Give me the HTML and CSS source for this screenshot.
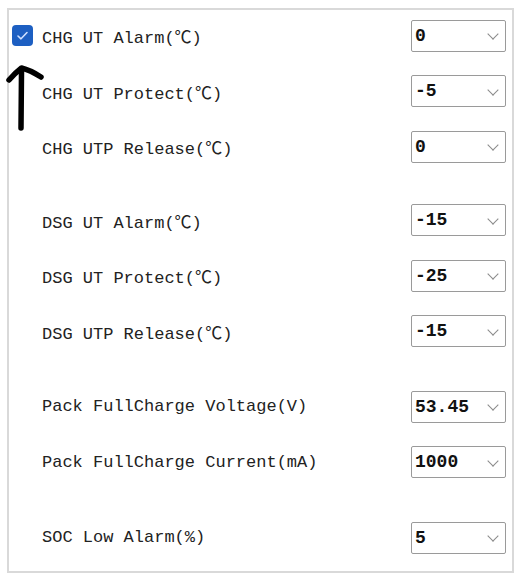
FILE: index.html
```html
<!DOCTYPE html>
<html lang="en">

<head>
    <meta charset="UTF-8" />
    <meta name="viewport" content="width=device-width, initial-scale=1.0" />
    <title>UT Settings</title>
    <link rel="stylesheet" href="styles.css">
</head>

<body>
    <div class="panel">
        <div class="group first">
            <div class="row">
                <span class="check-slot">
                    <span class="checkbox">
                        <svg width="21" height="21" viewBox="0 0 21 21">
                            <path d="M6 11 L9 13.8 L15 7.5" fill="none" stroke="#cfe0ff" stroke-width="1.6" stroke-linecap="round" stroke-linejoin="round" />
                        </svg>
                    </span>
                </span>
                <span class="label">CHG UT Alarm(℃)</span>
                <div class="select"><span class="value">0</span><i class="chev"></i></div>
            </div>
            <div class="row">
                <span class="check-slot"></span>
                <span class="label">CHG UT Protect(℃)</span>
                <div class="select"><span class="value">-5</span><i class="chev"></i></div>
            </div>
            <div class="row">
                <span class="check-slot"></span>
                <span class="label">CHG UTP Release(℃)</span>
                <div class="select"><span class="value">0</span><i class="chev"></i></div>
            </div>
        </div>

        <div class="group">
            <div class="row">
                <span class="check-slot"></span>
                <span class="label">DSG UT Alarm(℃)</span>
                <div class="select"><span class="value">-15</span><i class="chev"></i></div>
            </div>
            <div class="row">
                <span class="check-slot"></span>
                <span class="label">DSG UT Protect(℃)</span>
                <div class="select"><span class="value">-25</span><i class="chev"></i></div>
            </div>
            <div class="row">
                <span class="check-slot"></span>
                <span class="label">DSG UTP Release(℃)</span>
                <div class="select"><span class="value">-15</span><i class="chev"></i></div>
            </div>
        </div>

        <div class="group third">
            <div class="row">
                <span class="check-slot"></span>
                <span class="label">Pack FullCharge Voltage(V)</span>
                <div class="select"><span class="value">53.45</span><i class="chev"></i></div>
            </div>
            <div class="row">
                <span class="check-slot"></span>
                <span class="label">Pack FullCharge Current(mA)</span>
                <div class="select"><span class="value">1000</span><i class="chev"></i></div>
            </div>
        </div>

        <div class="group last">
            <div class="row">
                <span class="check-slot"></span>
                <span class="label">SOC Low Alarm(%)</span>
                <div class="select"><span class="value">5</span><i class="chev"></i></div>
            </div>
        </div>
    </div>

    <!-- 标注箭头 -->
    <svg class="arrow" width="44" height="72" viewBox="0 0 44 72">
        <path d="M16 66 L16.5 10" fill="none" stroke="#000" stroke-width="5.5" stroke-linecap="round" />
        <path d="M4 18 Q10 11 16.5 6 Q25 8 36 15" fill="none" stroke="#000" stroke-width="5.5" stroke-linecap="round" stroke-linejoin="round" />
    </svg>
</body>

</html>
```

FILE: styles.css
```css
* {
    margin: 0;
    padding: 0;
    box-sizing: border-box;
}

body {
    background: #fff;
    font-family: "Liberation Mono", "Noto Sans CJK SC", monospace;
    color: #222;
    position: relative;
}

.panel {
    width: 507px;
    height: 565px;
    margin: 8px 0 0 7px;
    border: 2px solid #d9d9d9;
    padding: 0 6px 0 3px;
}

.group.first {
    margin-top: -2px;
}

.group + .group {
    margin-top: 18px;
}

.group.third {
    margin-top: 20px;
}

.group.last {
    margin-top: 20px;
}

.row {
    height: 55.5px;
    display: flex;
    align-items: center;
}

.check-slot {
    width: 21px;
    height: 21px;
    margin-right: 9px;
    flex: none;
}

.checkbox {
    display: block;
    width: 21px;
    height: 21px;
    border-radius: 4px;
    background: #1d5fc2;
}

.checkbox svg {
    display: block;
}

.label {
    flex: 1;
    font-size: 17px;
    white-space: nowrap;
}

.select {
    width: 95px;
    height: 32px;
    border: 1px solid #9a9a9a;
    border-radius: 2px;
    display: flex;
    align-items: center;
    justify-content: space-between;
    padding: 0 8px 0 3px;
    background: #fff;
}

.value {
    font-size: 18px;
    font-weight: bold;
    color: #111;
}

/* 下拉箭头 */
.chev {
    width: 8px;
    height: 8px;
    border-right: 1.4px solid #8a8a8a;
    border-bottom: 1.4px solid #8a8a8a;
    transform: rotate(45deg);
    margin-top: -3px;
}

.arrow {
    position: absolute;
    left: 5px;
    top: 62px;
}
```
